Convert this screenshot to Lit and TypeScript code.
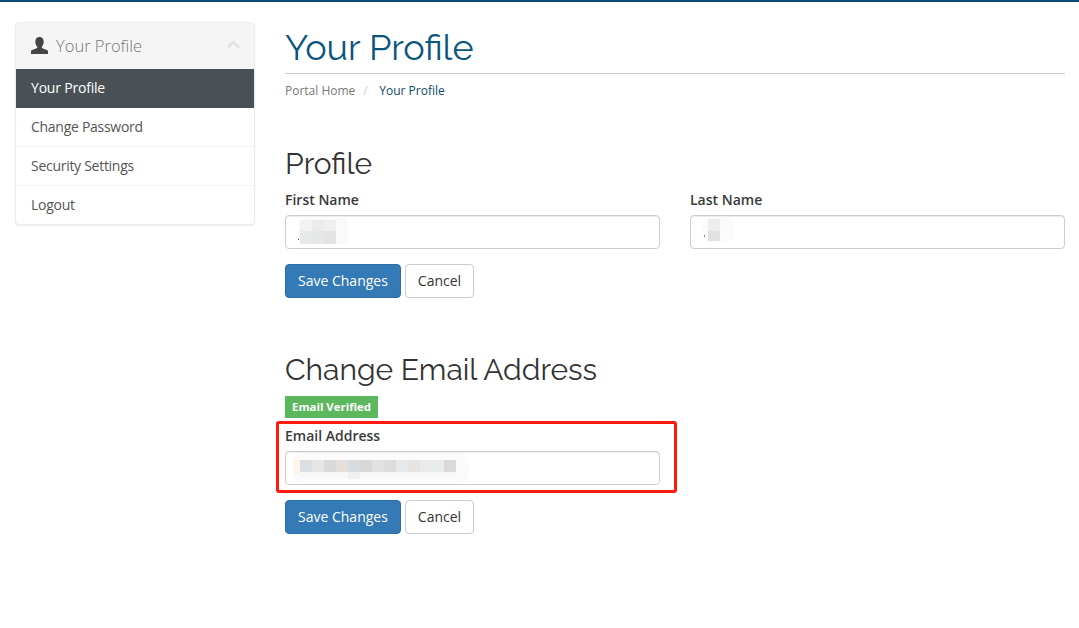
import { LitElement, html, css } from "lit";
import { customElement } from "lit/decorators.js";

type Cell = [number, number, number, number, string, number?];

const FIRST: Cell[] = [
  [12, 2, 51, 27, "#fcfbfa", 9],
  [15, 5, 12, 11, "#f1f2f4"], [27, 5, 12, 11, "#ebebeb"], [39, 5, 12, 11, "#efefef"], [51, 3, 12, 13, "#fafafa"],
  [15, 16, 12, 13, "#e8e9ea"], [27, 16, 12, 13, "#e6e7e7"], [39, 16, 12, 13, "#e4e4e4"], [51, 16, 12, 13, "#fafafa"],
  [13, 24, 1, 1, "#555555"],
];
const LAST: Cell[] = [
  [13, 2, 32, 25, "#fcfbfb", 9],
  [18, 4, 12, 12, "#ededed"], [30, 4, 12, 12, "#fbfbfc"],
  [18, 16, 12, 10, "#e2e2e2"], [30, 16, 12, 10, "#fcfcfc"],
  [14, 20, 1, 2, "#c8742a"],
];
const EMAIL: Cell[] = [
  [8, 3, 176, 30, "#fcfbfb", 10],
  [8, 8, 7, 16, "#fdf4ec", 3],
  ...["#d9dfe3", "#e6e6e6", "#d9d9d9", "#e6dedb", "#d5dde0", "#d8d8d8", "#e2e2e2", "#dcdcdc", "#e6eaea", "#e6e3e1", "#eaeaea", "#e8ecec", "#dcdad8"]
    .map((c, i): Cell => [15 + i * 12, 9, 12, 12, c]),
  [15, 21, 156, 6, "#f8f8f8"],
  [63, 21, 12, 7, "#f0f0f0"],
];

@customElement("app-root")
export class AppRoot extends LitElement {
  static styles = css`
    :host { display: block; width: 1079px; height: 628px; background: #fff; overflow: hidden; border-top: 2px solid #0a4f73; box-sizing: border-box; font-family: "Open Sans", sans-serif; color: #333; font-size: 14px; }
    .page { display: flex; align-items: flex-start; gap: 30px; padding: 20px 14px 0 15px; }
    .side { width: 240px; flex: none; box-sizing: border-box; border: 1px solid #ececec; border-radius: 4px; box-shadow: 0 1px 2px rgba(0,0,0,.08); background: #fff; overflow: hidden; }
    .side-h { height: 46px; background: #f5f5f5; display: flex; align-items: center; padding: 0 14px 2px 15px; box-sizing: border-box; gap: 8px; font-size: 16.500px; font-weight: 300; color: #777; }
    .side-h svg.u { width: 17px; height: 17px; color: #444; flex: none; }
    .side-h span { flex: 1; }
    .chev { margin-top: -2px; }
    .item { height: 39px; display: flex; align-items: center; padding: 0 15px 2px; color: #555; border-top: 1px solid #f3f3f3; box-sizing: border-box; letter-spacing: -0.28px; }
    .item.on { background: #495156; color: #fff; border-top: none; letter-spacing: -0.2px; }
    .item.on + .item { border-top: none; height: 38px; padding-bottom: 1px; }
    .main { flex: 1; min-width: 0; }
    h1 { margin: 0; font: 400 36px/50px Raleway, "Open Sans", sans-serif; color: #0a5580; border-bottom: 1px solid #ccc; height: 51px; }
    .crumb { margin-top: 9px; font-size: 12px; line-height: 16px; display: flex; gap: 8px; color: #777; }
    .crumb b { font-weight: 400; color: #ccc; margin-right: 2px; }
    .crumb i { font-style: normal; color: #0a4a68; margin-left: 1.500px; }
    h2 { margin: 0; font: 400 30px/36px Raleway, "Open Sans", sans-serif; color: #333; }
    .s1 { margin-top: 47px; }
    .s2 { margin-top: 54px; }
    .row { display: flex; gap: 30px; margin-top: 8px; }
    .f { flex: 1; }
    label { display: block; font-weight: 600; font-size: 14px; line-height: 20px; margin-bottom: 5px; color: #3a3a3a; }
    .in { height: 34px; box-sizing: border-box; border: 1px solid #ccc; border-radius: 4px; background: #fff; position: relative; box-shadow: inset 0 1px 1px rgba(0,0,0,.075); }
    .cell { position: absolute; }
    .btns { display: flex; gap: 4px; margin-top: 15px; }
    .btn { height: 34px; box-sizing: border-box; padding: 0 12px 2px; border: 1px solid #ccc; border-radius: 4px; display: flex; align-items: center; background: #fff; color: #333; }
    .btn.p { background: #337ab7; border-color: #2e6da4; color: #fff; }
    .badge { display: block; width: 93px; margin-top: 8px; background: #5cb85c; color: #fff; font-size: 11.400px; font-weight: 700; line-height: 21px; height: 22px; padding-left: 7px; box-sizing: border-box; white-space: nowrap; }
    .email { width: 375px; margin-top: 8px; position: relative; }
    .red { position: absolute; left: -9px; top: -5px; width: 401px; height: 72px; box-sizing: border-box; border: 3px solid #ff1a10; border-radius: 3px; pointer-events: none; }
  `;
  cells(list: Cell[]) {
    return list.map(([x, y, w, h, c, r]) => html`<div class="cell" style="left:${x - 1}px;top:${y - 1}px;width:${w}px;height:${h}px;background:${c};border-radius:${r ?? 0}px"></div>`);
  }
  render() {
    return html`<div class="page">
      <aside class="side">
        <div class="side-h">
          <svg class="u" viewBox="0 0 17 17"><path fill="currentColor" d="M8.500 0C5.900 0 4.300 1.900 4.300 4.700c0 2 .8 3.800 1.900 4.800v1.400L.6 13.200C.2 13.400 0 13.800 0 14.200V17h17v-2.800c0-.4-.2-.8-.6-1l-5.600-2.300V9.500c1.100-1 1.900-2.800 1.900-4.800C12.700 1.900 11.100 0 8.500 0z"/></svg>
          <span>Your Profile</span>
          <svg class="chev" width="13" height="9" viewBox="0 0 13 9"><path d="M1 7.500 6.500 2 12 7.500" fill="none" stroke="#e2e2e2" stroke-width="2.500"/></svg>
        </div>
        <div class="item on">Your Profile</div>
        <div class="item">Change Password</div>
        <div class="item">Security Settings</div>
        <div class="item">Logout</div>
      </aside>
      <main class="main">
        <h1>Your Profile</h1>
        <div class="crumb"><span>Portal Home</span><b>/</b><i>Your Profile</i></div>
        <section class="s1">
          <h2>Profile</h2>
          <div class="row">
            <div class="f"><label>First Name</label><div class="in">${this.cells(FIRST)}</div></div>
            <div class="f"><label>Last Name</label><div class="in">${this.cells(LAST)}</div></div>
          </div>
          <div class="btns"><div class="btn p">Save Changes</div><div class="btn">Cancel</div></div>
        </section>
        <section class="s2">
          <h2>Change Email Address</h2>
          <span class="badge">Email Verified</span>
          <div class="email">
            <div class="red"></div>
            <label>Email Address</label>
            <div class="in">${this.cells(EMAIL)}</div>
          </div>
          <div class="btns"><div class="btn p">Save Changes</div><div class="btn">Cancel</div></div>
        </section>
      </main>
    </div>`;
  }
}
